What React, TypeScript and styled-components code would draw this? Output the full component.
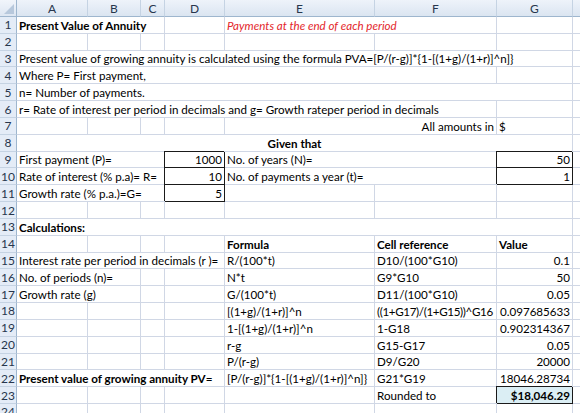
import React from "react";
import styled, { createGlobalStyle } from "styled-components";

const GlobalStyle = createGlobalStyle`
  html, body { margin: 0; padding: 0; background: #ffffff; }
  body { font-family: Lato, "Liberation Sans", sans-serif; }
`;

const COLS = "17px 71px 53px 24px 60px 150px 122px 76px 64px";
const ROW_H = 16.83;

const Sheet = styled.div`
  width: 580px;
  height: 413px;
  overflow: hidden;
  background: #fff;
  font-family: Lato, "Liberation Sans", sans-serif;
  font-size: 11.6px;
  color: #000;
`;

const HeaderRow = styled.div`
  display: grid;
  grid-template-columns: ${COLS};
  height: 17px;
`;

const Corner = styled.div`
  position: relative;
  background: linear-gradient(#f1f5fb, #dde6f2);
  border-right: 1px solid #9eb6ce;
  border-bottom: 1px solid #9eb6ce;
  box-sizing: border-box;
  &::after {
    content: "";
    position: absolute;
    right: 2px;
    bottom: 2px;
    width: 0;
    height: 0;
    border-left: 10px solid transparent;
    border-bottom: 10px solid #b7c8dc;
  }
`;

const ColHead = styled.div`
  display: flex;
  align-items: center;
  justify-content: center;
  background: linear-gradient(#eef3fa, #dbe5f1);
  border-right: 1px solid #c5d3e3;
  border-bottom: 1px solid #9eb6ce;
  box-sizing: border-box;
  color: #27364d;
  font-size: 12px;
`;

const Row = styled.div`
  display: grid;
  grid-template-columns: ${COLS};
  height: ${ROW_H}px;
`;

const RowHead = styled.div`
  display: flex;
  align-items: center;
  justify-content: center;
  background: #e4ecf7;
  border-right: 1px solid #9eb6ce;
  border-bottom: 1px solid #c5d3e3;
  box-sizing: border-box;
  color: #27364d;
  font-size: 12px;
`;

type Align = "left" | "right" | "center";

const Cell = styled.div<{
  $span: number;
  $align: Align;
  $bold?: boolean;
  $italic?: boolean;
  $red?: boolean;
  $box?: boolean;
  $fill?: boolean;
  $tight?: boolean;
}>`
  grid-column: span ${(p) => p.$span};
  display: flex;
  align-items: flex-end;
  justify-content: ${(p) =>
    p.$align === "right" ? "flex-end" : p.$align === "center" ? "center" : "flex-start"};
  padding: 0 2px 0 2px;
  box-sizing: border-box;
  white-space: nowrap;
  overflow: visible;
  line-height: 15px;
  letter-spacing: ${(p) => (p.$tight ? "-0.35px" : "normal")};
  border-right: 1px solid ${(p) => (p.$box ? "#1a1a1a" : "#d0d7e5")};
  border-bottom: 1px solid ${(p) => (p.$box ? "#1a1a1a" : "#d0d7e5")};
  box-shadow: ${(p) => (p.$box ? "-1px -1px 0 0 #1a1a1a" : "none")};
  background: ${(p) => (p.$fill ? "#dbeef4" : "#fff")};
  font-weight: ${(p) => (p.$bold ? 700 : 400)};
  font-style: ${(p) => (p.$italic ? "italic" : "normal")};
  color: ${(p) => (p.$red ? "#e3262b" : "#000")};
`;

type C = {
  t?: string;
  s?: number;
  a?: Align;
  b?: boolean;
  i?: boolean;
  r?: boolean;
  box?: boolean;
  fill?: boolean;
  tight?: boolean;
};

const E: C = {};
const empties = (n: number): C[] => Array.from({ length: n }, () => ({}));
const calc = (e: string, f: string, g: string, tight = false): C[] => [
  ...empties(4),
  { t: e },
  { t: f, tight },
  { t: g, a: "right" },
];

const rows: C[][] = [
  [{ t: "Present Value of Annuity", s: 3, b: true }, E, { t: "Payments at the end of each period", s: 2, i: true, r: true }, E],
  empties(7),
  [{ t: "Present  value of growing annuity is calculated using the formula PVA=[P/(r-g)]*{1-[(1+g)/(1+r)]^n]}", s: 7 }],
  [{ t: "Where P= First payment,", s: 6 }, E],
  [{ t: "n= Number of payments.", s: 7 }],
  [{ t: "r= Rate of interest per period in decimals and g= Growth rateper period in decimals", s: 6 }, E],
  [...empties(4), { t: "All amounts in", s: 2, a: "right" }, { t: "$" }],
  [{ t: "Given that", s: 7, a: "center", b: true }],
  [{ t: "First  payment (P)=", s: 3 }, { t: "1000", a: "right", box: true }, { t: "No. of years (N)=", s: 2 }, { t: "50", a: "right", box: true }],
  [{ t: "Rate of interest (% p.a)= R=", s: 3 }, { t: "10", a: "right", box: true }, { t: "No. of payments a year (t)=", s: 2 }, { t: "1", a: "right", box: true }],
  [{ t: "Growth rate (% p.a.)=G=", s: 3 }, { t: "5", a: "right", box: true }, E, E, E],
  empties(7),
  [{ t: "Calculations:", s: 7, b: true }],
  [...empties(4), { t: "Formula", b: true }, { t: "Cell reference", b: true }, { t: "Value", b: true }],
  [{ t: "Interest rate per period in decimals (r )=", s: 4 }, { t: "R/(100*t)" }, { t: "D10/(100*G10)" }, { t: "0.1", a: "right" }],
  [{ t: "No. of periods (n)=", s: 2 }, E, E, { t: "N*t" }, { t: "G9*G10" }, { t: "50", a: "right" }],
  [{ t: "Growth rate (g)", s: 2 }, E, E, { t: "G/(100*t)" }, { t: "D11/(100*G10)" }, { t: "0.05", a: "right" }],
  calc("[(1+g)/(1+r)]^n", "((1+G17)/(1+G15))^G16", "0.097685633", true),
  calc("1-[(1+g)/(1+r)]^n", "1-G18", "0.902314367"),
  calc("r-g", "G15-G17", "0.05"),
  calc("P/(r-g)", "D9/G20", "20000"),
  [{ t: "Present value of growing annuity PV=", s: 4, b: true }, { t: "[P/(r-g)]*{1-[(1+g)/(1+r)]^n]}" }, { t: "G21*G19" }, { t: "18046.28734", a: "right" }],
  [...empties(5), { t: "Rounded to" }, { t: "$18,046.29", a: "right", b: true, box: true, fill: true }],
  empties(7),
];

const letters = ["A", "B", "C", "D", "E", "F", "G", ""];

export default function App() {
  return (
    <Sheet>
      <GlobalStyle />
      <HeaderRow>
        <Corner />
        {letters.map((l, i) => (
          <ColHead key={i}>{l}</ColHead>
        ))}
      </HeaderRow>
      {rows.map((cells, ri) => (
        <Row key={ri}>
          <RowHead>{ri + 1}</RowHead>
          {cells.map((c, ci) => (
            <Cell
              key={ci}
              $span={c.s ?? 1}
              $align={c.a ?? "left"}
              $bold={c.b}
              $italic={c.i}
              $red={c.r}
              $box={c.box}
              $fill={c.fill}
              $tight={c.tight}
            >
              {c.t ?? ""}
            </Cell>
          ))}
          <Cell $span={1} $align="left" />
        </Row>
      ))}
    </Sheet>
  );
}
